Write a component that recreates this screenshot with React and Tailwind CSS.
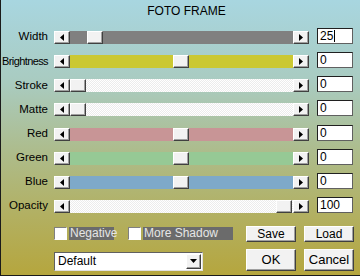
const font = { fontFamily: '"Liberation Sans", Arial, sans-serif' };

const raised =
  'bg-[#f2f2f2] border border-t-white border-l-white border-r-[#404040] border-b-[#404040] shadow-[inset_-1px_-1px_0_#a0a0a0]';

const rows = [
  { label: 'Width', track: 'bg-[#808080]', thumb: 17, value: '25', cursor: true },
  { label: 'Brightness', track: 'bg-[#cbc832]', thumb: 103, value: '0', tight: true },
  { label: 'Stroke', track: 'dither', thumb: 0, value: '0' },
  { label: 'Matte', track: 'dither', thumb: 0, value: '0' },
  { label: 'Red', track: 'bg-[#c89596]', thumb: 103, value: '0' },
  { label: 'Green', track: 'bg-[#96c995]', thumb: 103, value: '0' },
  { label: 'Blue', track: 'bg-[#7ea9c9]', thumb: 103, value: '0' },
  { label: 'Opacity', track: 'dither', thumb: 206, value: '100' },
];

const Arrow = ({ dir }) => (
  <svg width="4" height="7" viewBox="0 0 4 7">
    {dir === 'left' ? <path d="M4 0 L0 3.5 L4 7 Z" fill="#000" /> : <path d="M0 0 L4 3.5 L0 7 Z" fill="#000" />}
  </svg>
);

const Slider = ({ track, thumb }) => {
  const trackCls =
    track === 'dither'
      ? 'bg-[conic-gradient(#ffffff_25%,#ececec_0_50%,#ffffff_0_75%,#ececec_0)] bg-[length:2px_2px]'
      : track;
  return (
    <div className="flex h-[13px] w-[255px]">
      <div className={`${raised} flex w-[16px] items-center justify-center`}>
        <Arrow dir="left" />
      </div>
      <div className={`relative flex-1 ${trackCls}`}>
        <div className={`${raised} absolute top-0 h-[13px] w-[16px]`} style={{ left: thumb }} />
      </div>
      <div className={`${raised} flex w-[16px] items-center justify-center`}>
        <Arrow dir="right" />
      </div>
    </div>
  );
};

const Check = ({ label, width }) => (
  <div className="flex items-center">
    <div className="h-[13px] w-[13px] border border-t-[#808080] border-l-[#808080] border-r-white border-b-white bg-white" />
    <div className={`ml-[2px] flex h-[13px] items-center bg-[#6b6b6b] pl-[1px] text-[12px] leading-none text-[#e6e6e6] ${width}`}>
      {label}
    </div>
  </div>
);

export default function App() {
  return (
    <div
      style={font}
      className="flex h-[276px] w-[360px] flex-col overflow-hidden border-b border-l border-[#1a1a1a] bg-[linear-gradient(to_bottom,#a8d6e0_0%,#a9cbc0_30%,#adbc8c_55%,#b2b062_78%,#b5a63e_100%)] text-black"
    >
      <div className="flex h-[28px] justify-center pl-[12px] pt-[4px] text-[12px] leading-[14px]">FOTO FRAME</div>

      <div className="flex flex-col gap-y-[8.15px]">
        {rows.map((r) => (
          <div key={r.label} className="flex h-[16px] items-end">
            <div
              className={`flex w-[47px] justify-end self-center whitespace-nowrap pt-[2px] leading-none ${
                r.tight ? 'text-[11px] tracking-[-0.6px]' : 'text-[11.5px]'
              }`}
            >
              {r.label}
            </div>
            <div className="ml-[6px]">
              <Slider track={r.track} thumb={r.thumb} />
            </div>
            <div className="ml-[8px] flex h-[16px] w-[36px] items-center border border-t-[#202020] border-l-[#202020] border-r-[#606060] border-b-[#606060] bg-white pl-[2px] text-[12px] leading-none">
              {r.value}
              {r.cursor && <span className="ml-[1px] inline-block h-[12px] w-[1px] bg-black" />}
            </div>
          </div>
        ))}
      </div>

      <div className="mt-[13px] flex items-start pl-[53px]">
        <div className="flex w-[192px] gap-x-[14px] pt-[1px]">
          <Check label="Negative" width="w-[45px]" />
          <Check label="More Shadow" width="w-[90px]" />
        </div>
        <div className="flex gap-x-[8px]">
          <div className={`${raised} flex h-[16px] w-[50px] items-center justify-center text-[12px] leading-none`}>Save</div>
          <div className={`${raised} flex h-[16px] w-[50px] items-center justify-center text-[12px] leading-none`}>Load</div>
        </div>
      </div>

      <div className="mt-[7px] flex items-start pl-[53px]">
        <div className="mt-[3px] flex h-[19px] w-[149px] items-center border border-t-[#606060] border-l-[#606060] border-r-[#e0e0e0] border-b-[#e0e0e0] bg-white pl-[3px] pr-[1px] text-[12px] leading-none">
          <span className="flex-1">Default</span>
          <div className={`${raised} flex h-[15px] w-[15px] items-center justify-center`}>
            <svg width="7" height="4" viewBox="0 0 7 4">
              <path d="M0 0 L7 0 L3.5 4 Z" fill="#000" />
            </svg>
          </div>
        </div>
        <div className="ml-[43px] flex gap-x-[8px]">
          <div className={`${raised} flex h-[22px] w-[50px] items-center justify-center text-[13px] leading-none`}>OK</div>
          <div className={`${raised} flex h-[22px] w-[50px] items-center justify-center text-[13px] leading-none`}>Cancel</div>
        </div>
      </div>
    </div>
  );
}
